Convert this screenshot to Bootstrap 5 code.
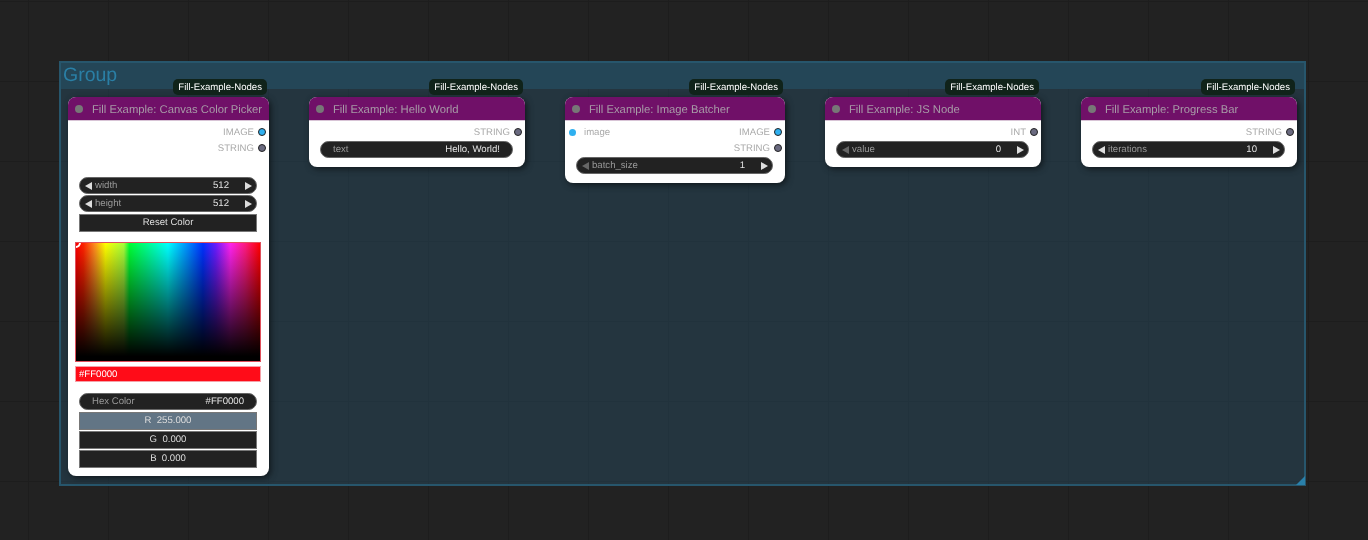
<!DOCTYPE html>
<html lang="en">
<head>
  <meta charset="UTF-8" />
  <title>Fill Example Nodes</title>
  <link href="https://cdn.jsdelivr.net/npm/bootstrap@5.3.3/dist/css/bootstrap.min.css" rel="stylesheet">
  <style>
    html, body { height: 100%; margin: 0; overflow: hidden; }
    body {
      font-family: "Liberation Sans", Arial, sans-serif;
      font-size: 9.6px;
      line-height: 1;
      text-rendering: geometricPrecision;
      background-color: #222;
      background-image:
        linear-gradient(90deg, #1d1d1d 1px, transparent 1px),
        linear-gradient(#1d1d1d 1px, transparent 1px);
      background-size: 80px 80px;
      background-position: 28px 1px;
    }
    .canvas { position: relative; width: 1368px; height: 540px; overflow: hidden; will-change: transform; }

    .group { position: absolute; left: 59px; top: 61px; width: 1247px; height: 425px; background: rgba(38,72,92,.5); border: 2px solid #27566c; }
    .group-head { height: 26px; background: rgba(38,74,92,.85); color: #2a7fa5; font-size: 19.5px; padding: 3px 0 0 2px; }
    .group-grip { position: absolute; right: -1px; bottom: -1px; width: 0; height: 0; border-left: 9px solid transparent; border-bottom: 9px solid #2a80aa; }

    .node { position: absolute; top: 97px; background: #fff; border-radius: 8px; box-shadow: 2px 2px 6px rgba(0,0,0,.55); }
    #n1 { left: 68px; width: 201px; height: 379px; }
    #n2 { left: 309px; width: 216px; height: 70px; }
    #n3 { left: 565px; width: 220px; height: 86px; }
    #n4 { left: 825px; width: 216px; height: 70px; }
    #n5 { left: 1081px; width: 216px; height: 70px; }

    .badge-pack { position: absolute; right: 2px; top: -18px; height: 16px; padding: 0 5px; background: #10231a; color: #fff; border-radius: 5px; line-height: 18px; }
    .node-head { height: 24px; padding: 5px 0 0 7px; gap: 9px; background: #701068; color: #a89ca8; font-size: 11.25px; border-radius: 8px 8px 0 0; border-bottom: 1px solid #d8c4d6; }
    .node-dot { width: 8px; height: 8px; margin-top: -4px; border-radius: 50%; background: #777; }

    .slot { height: 16px; padding-right: 3px; gap: 4px; color: #aaa; }
    .slot-first { margin-top: 4px; }
    .pin { width: 8px; height: 8px; margin-bottom: 2px; border-radius: 50%; border: 1px solid #222; }
    .pin-image { background: #2fb0f0; }
    .pin-string { background: #6a6a80; }
    .pin-in { margin: 0 4px 2px 4px; border: 0; width: 7px; height: 7px; }

    .widget { height: 17px; margin: 0 12px 1px 11px; padding: 0 4px 0 5px; background: #222; border: 1px solid #666; border-radius: 9px; color: #999; }
    .widget-first { margin-top: 20px; }
    .widget .val { color: #e4e4e4; margin-right: 16px; }
    .widget.plain { padding: 0 12px; }
    .widget.plain .val { margin-right: 0; }
    .arrow-l, .arrow-r { width: 0; height: 0; border-top: 4px solid transparent; border-bottom: 4px solid transparent; }
    .arrow-l { border-right: 7px solid #ddd; margin-right: 3px; }
    .arrow-r { border-left: 7px solid #ddd; }
    .arrow-l.dim { border-right-color: #666; }

    .btn-node { height: 18px; margin: 1px 12px 0 11px; background: #222; border: 1px solid #777; color: #ddd; }
    .btn-node.btn-first { margin-top: 2px; }
    .btn-node.active { background: #627585; }

    .picker { position: relative; height: 120px; margin: 10px 8px 4px 7px; overflow: hidden; border: 1px solid #e0505c; background:
      linear-gradient(rgba(0,0,0,0), #000 96%),
      linear-gradient(90deg, #f00 0%, #f20 4%, #ff8a1e 10%, #ff0 16%, #a6ff3a 26%, #0f3 29%, #0f8 38%, #0ff 50%, #08f 61%, #0030ff 69%, #6a1cff 76%, #ff22ee 84%, #ff1a80 92%, #f00 100%);
    }
    .picker-cursor { position: absolute; left: -6px; top: -6px; width: 11px; height: 11px; border: 2px solid #fff; border-radius: 50%; }
    .hex-field { height: 16px; margin: 0 8px 11px 7px; padding: 2px 0 0 3px; background: #ff0c18; border: 1px solid #f5a0a8; color: #fff; }
  </style>
</head>
<body>
  <div class="canvas">
    <div class="group">
      <div class="group-head">Group</div>
      <div class="group-grip"></div>
    </div>

    <div class="node" id="n1">
      <span class="badge-pack">Fill-Example-Nodes</span>
      <div class="node-head d-flex align-items-center"><span class="node-dot"></span>Fill Example: Canvas Color Picker</div>
      <div class="slot slot-first d-flex justify-content-end align-items-center">IMAGE<span class="pin pin-image"></span></div>
      <div class="slot d-flex justify-content-end align-items-center">STRING<span class="pin pin-string"></span></div>
      <div class="widget widget-first d-flex align-items-center"><i class="arrow-l"></i><span class="flex-grow-1">width</span><span class="val">512</span><i class="arrow-r"></i></div>
      <div class="widget d-flex align-items-center"><i class="arrow-l"></i><span class="flex-grow-1">height</span><span class="val">512</span><i class="arrow-r"></i></div>
      <div class="btn-node btn-first d-flex justify-content-center align-items-center">Reset Color</div>
      <div class="picker"><span class="picker-cursor"></span></div>
      <div class="hex-field d-flex align-items-center">#FF0000</div>
      <div class="widget plain d-flex align-items-center"><span class="flex-grow-1">Hex Color</span><span class="val">#FF0000</span></div>
      <div class="btn-node btn-first active d-flex justify-content-center align-items-center">R&nbsp; 255.000</div>
      <div class="btn-node d-flex justify-content-center align-items-center">G&nbsp; 0.000</div>
      <div class="btn-node d-flex justify-content-center align-items-center">B&nbsp; 0.000</div>
    </div>

    <div class="node" id="n2">
      <span class="badge-pack">Fill-Example-Nodes</span>
      <div class="node-head d-flex align-items-center"><span class="node-dot"></span>Fill Example: Hello World</div>
      <div class="slot slot-first d-flex justify-content-end align-items-center">STRING<span class="pin pin-string"></span></div>
      <div class="widget plain d-flex align-items-center"><span class="flex-grow-1">text</span><span class="val">Hello, World!</span></div>
    </div>

    <div class="node" id="n3">
      <span class="badge-pack">Fill-Example-Nodes</span>
      <div class="node-head d-flex align-items-center"><span class="node-dot"></span>Fill Example: Image Batcher</div>
      <div class="slot slot-first d-flex align-items-center"><span class="pin pin-image pin-in"></span><span class="flex-grow-1">image</span>IMAGE<span class="pin pin-image"></span></div>
      <div class="slot d-flex justify-content-end align-items-center">STRING<span class="pin pin-string"></span></div>
      <div class="widget d-flex align-items-center"><i class="arrow-l dim"></i><span class="flex-grow-1">batch_size</span><span class="val">1</span><i class="arrow-r"></i></div>
    </div>

    <div class="node" id="n4">
      <span class="badge-pack">Fill-Example-Nodes</span>
      <div class="node-head d-flex align-items-center"><span class="node-dot"></span>Fill Example: JS Node</div>
      <div class="slot slot-first d-flex justify-content-end align-items-center">INT<span class="pin pin-string"></span></div>
      <div class="widget d-flex align-items-center"><i class="arrow-l dim"></i><span class="flex-grow-1">value</span><span class="val">0</span><i class="arrow-r"></i></div>
    </div>

    <div class="node" id="n5">
      <span class="badge-pack">Fill-Example-Nodes</span>
      <div class="node-head d-flex align-items-center"><span class="node-dot"></span>Fill Example: Progress Bar</div>
      <div class="slot slot-first d-flex justify-content-end align-items-center">STRING<span class="pin pin-string"></span></div>
      <div class="widget d-flex align-items-center"><i class="arrow-l"></i><span class="flex-grow-1">iterations</span><span class="val">10</span><i class="arrow-r"></i></div>
    </div>
  </div>
  <script src="https://cdn.jsdelivr.net/npm/bootstrap@5.3.3/dist/js/bootstrap.bundle.min.js"></script>
</body>
</html>
